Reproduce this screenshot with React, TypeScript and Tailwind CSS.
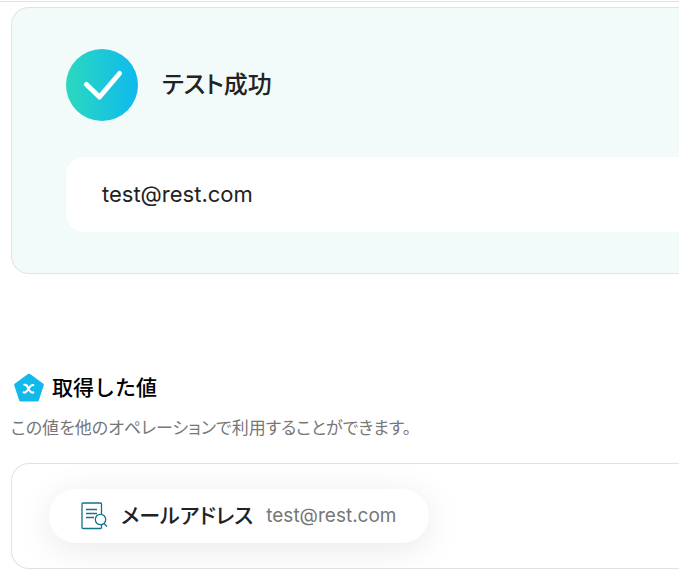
import React from "react";

function SuccessIcon() {
  return (
    <svg className="size-18 shrink-0" viewBox="0 0 72 72" fill="none" aria-hidden="true">
      <defs>
        <linearGradient id="success" x1="0" y1="0" x2="1" y2="0">
          <stop offset="0" stopColor="#2bd9bd" />
          <stop offset="1" stopColor="#0fb9ef" />
        </linearGradient>
      </defs>
      <circle cx="36" cy="36" r="36" fill="url(#success)" />
      <path d="M20.5 35.5 33.5 48 53.5 24.5" stroke="#fff" strokeWidth="5" strokeLinecap="round" strokeLinejoin="round" />
    </svg>
  );
}

function ValueIcon() {
  return (
    <svg className="size-[30px] shrink-0" viewBox="0 0 30 30" fill="none" aria-hidden="true">
      <path
        d="M15 2.5 28 12 23.2 26.7H6.8L2 12Z"
        fill="#12b9ea"
        stroke="#12b9ea"
        strokeWidth="3.6"
        strokeLinejoin="round"
      />
      <path
        d="M10.2 11.8C12.4 11.200 13 12.600 14.200 15.200S16.600 20.600 19.400 19.400M19.400 12.200C17.200 11.200 16 13.600 14.500 15.800S11.800 20.600 9.600 19.400"
        stroke="#fff"
        strokeWidth="2"
        strokeLinecap="round"
      />
    </svg>
  );
}

function DocumentSearchIcon() {
  return (
    <svg className="h-7 w-[27px] shrink-0" viewBox="0 0 27 28" fill="none" stroke="#127289" strokeWidth="1.3" aria-hidden="true">
      <path d="M20.5 12V2a1 1 0 0 0-1-1H2a1 1 0 0 0-1 1v23.500a1 1 0 0 0 1 1h17.500a1 1 0 0 0 1-1V23" />
      <path d="M5 7.500h11M5 11.500h11M5 15.500h8" />
      <circle cx="19.500" cy="17.500" r="5.200" />
      <path d="m23 21.500 3 3" />
    </svg>
  );
}

export default function App() {
  return (
    <main className="overflow-hidden bg-white pt-px pb-1 font-['Inter','Noto_Sans_CJK_JP',sans-serif] text-[#222] [font-feature-settings:'palt']">
      <div className="border-t border-[#e2e2e2] pt-[5px] pl-[11px]">
        <section className="rounded-l-[18px] border border-r-0 border-[#e2e4e4] bg-[#f2fbfa] pt-[41px] pb-[41px] pl-[54px]">
          <div className="flex items-center gap-6">
            <SuccessIcon />
            <h1 className="text-[24px] leading-8 font-medium">テスト成功</h1>
          </div>
          <output className="mt-9 block rounded-l-[18px] bg-white py-[22px] pl-9 text-[22px] leading-[31px]">
            test@rest.com
          </output>
        </section>

        <section className="mt-[98px]">
          <div className="flex items-center gap-2 pl-[3px]">
            <ValueIcon />
            <h2 className="text-[21px] leading-8 font-medium text-black [font-feature-settings:normal]">取得した値</h2>
          </div>
          <p className="mt-3 text-[17px] leading-6 text-[#777]">この値を他のオペレーションで利用することができます。</p>
          <div className="mt-[23px] overflow-hidden rounded-l-[18px] border border-r-0 border-[#e2e2e2] py-[25px] pl-[37px]">
            <div className="inline-flex h-[54px] items-center gap-[13px] rounded-full bg-white px-8 align-top shadow-[0_6px_36px_rgba(0,0,0,0.09)]">
              <DocumentSearchIcon />
              <span className="text-[21px] leading-8 font-medium">メールアドレス</span>
              <span className="text-[19px] leading-8 text-[#777]">test@rest.com</span>
            </div>
          </div>
        </section>
      </div>
    </main>
  );
}
